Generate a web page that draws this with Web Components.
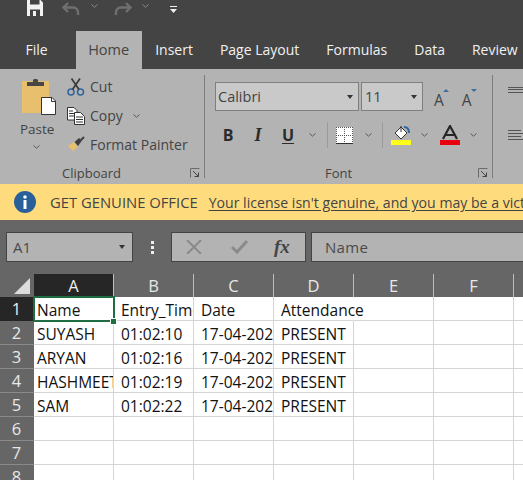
<!DOCTYPE html>
<html>
<head>
<meta charset="utf-8">
<style>
    html, body { margin: 0; padding: 0; background: #fff; }
    body {
        width: 523px;
        height: 480px;
        overflow: hidden;
        font-family: "Open Sans", "Liberation Sans", sans-serif;
        color: #444;
    }
</style>
</head>
<body>
<xl-titlebar></xl-titlebar>
<xl-tabs></xl-tabs>
<xl-ribbon></xl-ribbon>
<xl-banner></xl-banner>
<xl-formula-bar></xl-formula-bar>
<xl-sheet></xl-sheet>

<script>
const CHEVRON = (color = '#5a5a5a') => `<svg width="7" height="4" viewBox="0 0 7 4"><path d="M.5.5 3.5 3.2 6.5.5" fill="none" stroke="${color}" stroke-width="1"/></svg>`;

class XlTitlebar extends HTMLElement {
    constructor() {
        super();
        this.attachShadow({ mode: 'open' });
        this.shadowRoot.innerHTML = `
            <style>
                :host { display: flex; align-items: flex-start; height: 31px; background: #444; padding-left: 27px; box-sizing: border-box; }
                svg { display: block; flex: none; }
                .undo { margin: 2px 0 0 19px; }
                .chev1 { margin: 4px 0 0 11px; }
                .redo { margin: 2px 0 0 16px; }
                .chev2 { margin: 4px 0 0 10px; }
                .more { margin: 6px 0 0 21px; }
            </style>
            <svg width="16" height="16" viewBox="0 0 16 16"><path d="M0 0H13.5L16 2.5V16H0Z" fill="#f2f2f2"/><rect x="3" y="0" width="9.500" height="4.500" fill="#444"/><rect x="3" y="9.500" width="10" height="6.500" fill="#444"/><rect x="6" y="11" width="3" height="5" fill="#f2f2f2"/></svg>
            <svg class="undo" width="18" height="14" viewBox="0 0 18 14"><path d="M6 1 1.500 5.500 6 10M2 5.500H11C14.500 5.500 16.500 8 16 13" fill="none" stroke="#6f6f6f" stroke-width="2.400"/></svg>
            <span class="chev1">${CHEVRON('#8a8a8a')}</span>
            <svg class="redo" width="18" height="14" viewBox="0 0 18 14"><path d="M12 1 16.500 5.500 12 10M16 5.500H7C3.500 5.500 1.500 8 2 13" fill="none" stroke="#6f6f6f" stroke-width="2.400"/></svg>
            <span class="chev2">${CHEVRON('#8a8a8a')}</span>
            <svg class="more" width="7" height="8" viewBox="0 0 7 8"><rect x="0" y="0" width="7" height="1" fill="#eee"/><path d="M0 3H7L3.500 7Z" fill="#eee"/></svg>
        `;
    }
}

class XlTabs extends HTMLElement {
    constructor() {
        super();
        this.attachShadow({ mode: 'open' });
        const names = ['File', 'Home', 'Insert', 'Page Layout', 'Formulas', 'Data', 'Review'];
        this.shadowRoot.innerHTML = `
            <style>
                :host { display: flex; height: 38px; background: #444; padding-left: 12px; box-sizing: border-box; overflow: hidden; font-size: 14px; color: #f1f1f1; white-space: nowrap; }
                div { flex: none; padding: 0 13.5px; line-height: 38px; }
                div:first-of-type { padding-right: 28px; }
                .on { background: #b3b3b3; color: #444; padding: 0; width: 66px; text-align: center; font-size: 14.500px; box-sizing: border-box; }
            </style>
            ${names.map(n => `<div class="${n === 'Home' ? 'on' : ''}">${n}</div>`).join('')}
        `;
    }
}

class XlRibbon extends HTMLElement {
    constructor() {
        super();
        this.attachShadow({ mode: 'open' });
        const launcher = `<svg class="launch" width="10" height="10" viewBox="0 0 10 10"><path d="M.5 9.500V.5H9.500" fill="none" stroke="#6a6a6a"/><path d="M3 3 8.500 8.500M8.500 4.500V8.500H4.500" fill="none" stroke="#444"/></svg>`;
        this.shadowRoot.innerHTML = `
            <style>
                :host { display: flex; height: 115px; background: #b3b3b3; padding-top: 6px; box-sizing: border-box; overflow: hidden; font-size: 14px; color: #444; white-space: nowrap; }
                svg { display: block; flex: none; }
                .sep { flex: none; width: 1px; height: 103px; background: #7d7d7d; }
                .group { flex: none; display: grid; grid-template-rows: 90px 16px; box-sizing: border-box; }
                .label { display: flex; align-items: center; font-size: 13px; line-height: 16px; padding-right: 4px; }
                .launch { margin-left: auto; }

                .clipboard { width: 204px; }
                .clipboard .main { display: flex; }
                .clipboard .label { padding-left: 62px; }
                .paste { width: 67px; box-sizing: border-box; padding: 3px 0 0 21px; font-size: 13.500px; }
                .paste span { display: block; margin: 4px 0 0 -1px; line-height: 20px; }
                .paste i { display: block; margin: 6px 0 0 12px; }
                .actions { display: grid; grid-template-rows: repeat(3, 29px); margin-top: -3px; }
                .act { display: flex; align-items: center; }
                .act svg { width: 18px; margin-right: 5px; }
                .act i { margin-left: 10px; display: block; }
                .act i svg { width: 7px; margin: 0; }

                .font { width: 287px; padding-left: 10px; }
                .font .label { padding-left: 110px; }
                .row1 { display: flex; align-items: center; margin-top: 7px; height: 29px; }
                .combo { box-sizing: border-box; height: 29px; background: #c9c9c9; border: 1px solid #7f7f7f; display: flex; align-items: center; justify-content: space-between; padding: 0 5px 0 2px; font-size: 14.500px; }
                .combo.name { width: 144px; margin-right: 2px; }
                .combo.size { width: 62px; padding-left: 3px; }
                .tri { width: 0; height: 0; border: 3.500px solid transparent; border-top: 4px solid #333; border-bottom: 0; }
                .grow { position: relative; display: block; font-size: 15.500px; line-height: 20px; margin-top: 6px; }
                .grow svg { position: absolute; top: -1px; }
                .row2 { display: flex; align-items: center; margin: 11px 0 0 -2px; height: 26px; }
                .bt { width: 30px; text-align: center; font-size: 16px; font-weight: 700; color: #2b2b2b; flex: none; box-sizing: border-box; }
                .bt.i { font-family: "Liberation Serif", serif; font-style: italic; font-size: 18px; }
                .bt.u { text-decoration: underline; text-underline-offset: 2px; }
                .vsep { width: 1px; height: 26px; background: #9a9a9a; flex: none; }

                .align { padding: 12px 0 0 15px; display: grid; grid-template-rows: 43px 20px; }
            </style>
            <div class="group clipboard">
                <div class="main">
                    <div class="paste">
                        <svg width="35" height="37" viewBox="0 0 35 37"><rect x="1" y="3" width="27" height="32" fill="#e8c06d"/><path d="M6 8V4H12V2C12 .5 17 .5 17 2V4H23V8Z" fill="#474747"/><path d="M20.500 19.500H31L34.500 23V36.500H20.500Z" fill="#fff" stroke="#333"/><path d="M30.500 19.500V23.500H34.500" fill="none" stroke="#333"/></svg>
                        <span>Paste</span>
                        <i>${CHEVRON()}</i>
                    </div>
                    <div class="actions">
                        <div class="act"><svg height="18" viewBox="0 0 18 18"><circle cx="4" cy="14" r="3" fill="none" stroke="#2f659f" stroke-width="1.500"/><circle cx="13.500" cy="14" r="3" fill="none" stroke="#2f659f" stroke-width="1.500"/><path d="M5.500 11.500 13 .5M12 11.500 4.500 .5" stroke="#3a3a3a" stroke-width="1.700" fill="none"/></svg>Cut</div>
                        <div class="act"><svg height="18" viewBox="0 0 18 18"><path d="M.5.5H7L10 3.500V13H.5Z" fill="#fff" stroke="#333"/><path d="M2 4H6M2 6.500H8M2 9H8" stroke="#333"/><path d="M7.500 5.500H13.500L17.500 9.500V17.500H7.500Z" fill="#fff" stroke="#333"/><path d="M9 10H16M9 12.500H16M9 15H16" stroke="#333"/></svg>Copy<i>${CHEVRON()}</i></div>
                        <div class="act"><svg height="18" viewBox="0 0 18 18"><path d="M1 10 7 6 11 11 6 15 4 13Z" fill="#e8c06d"/><path d="M7.500 6 12 2 15 4.500 11 10Z" fill="#3f3f3f"/><path d="M14 4 17 1" stroke="#3f3f3f" stroke-width="2"/></svg>Format Painter</div>
                    </div>
                </div>
                <div class="label">Clipboard${launcher}</div>
            </div>
            <div class="sep"></div>
            <div class="group font">
                <div>
                    <div class="row1">
                        <div class="combo name">Calibri<span class="tri"></span></div>
                        <div class="combo size">11<span class="tri"></span></div>
                        <span class="grow" style="margin-left:11px">A<svg style="left:9px" width="6" height="3" viewBox="0 0 6 3"><path d="M3 0 6 3H0Z" fill="#3e6da3"/></svg></span>
                        <span class="grow" style="margin-left:18px">A<svg style="left:9px" width="6" height="3" viewBox="0 0 6 3"><path d="M0 0H6L3 3Z" fill="#3e6da3"/></svg></span>
                    </div>
                    <div class="row2">
                        <span class="bt">B</span><span class="bt i">I</span><span class="bt u">U</span>
                        <span style="margin:0 11px 0 6px">${CHEVRON()}</span>
                        <span class="vsep"></span>
                        <svg style="margin-left:8px" width="17" height="17" viewBox="0 0 17 17"><rect width="17" height="17" fill="#fff"/><path d="M8.500 0V17M0 8.500H17" stroke="#555" stroke-dasharray="1 1"/><path d="M.5 0V17M16.500 0V17M0 .5H17" stroke="#555" stroke-dasharray="1 1"/><path d="M0 16.500H17" stroke="#333"/></svg>
                        <span style="margin:0 10px 0 12px">${CHEVRON()}</span>
                        <span class="vsep"></span>
                        <svg style="margin-left:8px" width="21" height="20" viewBox="0 0 21 20"><path d="M4 8 10 2 16 8 10 14Z" fill="#fff" stroke="#333"/><path d="M10 1V7" stroke="#333"/><path d="M13 2C16 2 18 4 18 8" fill="none" stroke="#2f659f" stroke-width="2"/><rect x="0" y="15" width="20" height="5" fill="#ffff1a"/></svg>
                        <span style="margin:0 11px 0 9px">${CHEVRON()}</span>
                        <svg style="margin-left:1px" width="21" height="20" viewBox="0 0 21 20"><path d="M3 14 10 1 17 14M6 10H14" fill="none" stroke="#262626" stroke-width="2.200"/><rect x="0" y="15" width="20" height="5" fill="#e8000d"/></svg>
                        <span style="margin-left:9px">${CHEVRON()}</span>
                    </div>
                </div>
                <div class="label">Font${launcher}</div>
            </div>
            <div class="sep"></div>
            <div class="align">
                <svg width="15" height="6" viewBox="0 0 15 6"><path d="M0 .5H15M0 2.500H15M0 5.500H15" stroke="#555"/></svg>
                <svg width="15" height="11" viewBox="0 0 15 11"><path d="M0 .5H13M0 3.500H15M0 6.500H13M0 9.500H15" stroke="#555"/></svg>
            </div>
        `;
    }
}

class XlBanner extends HTMLElement {
    constructor() {
        super();
        this.attachShadow({ mode: 'open' });
        this.shadowRoot.innerHTML = `
            <style>
                :host { display: flex; align-items: center; height: 36px; background: #fedc7e; padding-left: 14px; box-sizing: border-box; overflow: hidden; white-space: nowrap; color: #444; font-size: 14.100px; }
                svg { flex: none; margin-right: 14px; }
                b { font-weight: 500; font-size: 14.800px; margin-right: 11px; }
                u { text-underline-offset: 2px; }
            </style>
            <svg width="22" height="22" viewBox="0 0 22 22"><circle cx="11" cy="11" r="11" fill="#2a6099"/><rect x="9.500" y="9" width="3" height="9" fill="#fff"/><circle cx="11" cy="6" r="1.800" fill="#fff"/></svg>
            <b>GET GENUINE OFFICE</b>
            <u>Your license isn't genuine, and you may be a victim of software counterfeiting.</u>
        `;
    }
}

class XlFormulaBar extends HTMLElement {
    constructor() {
        super();
        this.attachShadow({ mode: 'open' });
        this.shadowRoot.innerHTML = `
            <style>
                :host { display: flex; height: 54px; background: #666; padding: 12px 0 0 6px; box-sizing: border-box; overflow: hidden; font-size: 15px; color: #4a4a4a; }
                .box { box-sizing: border-box; height: 30px; background: #b3b3b3; border: 1px solid #444; display: flex; align-items: center; flex: none; }
                .namebox { width: 127px; justify-content: space-between; padding: 0 7px 0 6px; }
                .tri { width: 0; height: 0; border: 3.500px solid transparent; border-top: 4px solid #333; border-bottom: 0; }
                .dots { flex: none; width: 38px; display: grid; justify-content: center; align-content: center; gap: 2px; height: 30px; }
                .dots i { width: 3px; height: 3px; background: #eee; }
                .tools { width: 135px; margin-right: 5px; padding-left: 14px; }
                .tools svg { flex: none; }
                .fx { font-family: "Liberation Serif", serif; font-style: italic; font-weight: 700; font-size: 19px; color: #444; margin-left: 26px; }
                .input { flex: 1; margin-right: -3px; padding-left: 13px; letter-spacing: .3px; }
            </style>
            <div class="box namebox">A1<span class="tri"></span></div>
            <div class="dots"><i></i><i></i><i></i></div>
            <div class="box tools">
                <svg width="16" height="14" viewBox="0 0 16 14"><path d="M1 0 15 14M15 0 1 14" stroke="#8a8a8a" stroke-width="2"/></svg>
                <svg style="margin-left:29px" width="17" height="14" viewBox="0 0 17 14"><path d="M1 7 6 12 16 1" fill="none" stroke="#8a8a8a" stroke-width="3"/></svg>
                <span class="fx">fx</span>
            </div>
            <div class="box input">Name</div>
        `;
    }
}

class XlSheet extends HTMLElement {
    constructor() {
        super();
        this.attachShadow({ mode: 'open' });
        const rows = [
            ['Name', 'Entry_Time', 'Date', 'Attendance'],
            ['SUYASH', '01:02:10', '17-04-2021', 'PRESENT'],
            ['ARYAN', '01:02:16', '17-04-2021', 'PRESENT'],
            ['HASHMEET', '01:02:19', '17-04-2021', 'PRESENT'],
            ['SAM', '01:02:22', '17-04-2021', 'PRESENT']
        ];
        const cols = ['A', 'B', 'C', 'D', 'E', 'F', 'G'];
        let html = `<div class="corner"><svg width="17" height="18" viewBox="0 0 17 18"><path d="M16 1V17H0Z" fill="#dcdcdc"/></svg></div>`;
        cols.forEach(c => { html += `<div class="ch ${c === 'A' ? 'on' : ''}">${c === 'G' ? '' : c}</div>`; });
        for (let r = 0; r < 8; r++) {
            html += `<div class="rh ${r === 0 ? 'on' : ''}">${r + 1}</div>`;
            cols.forEach((c, i) => {
                const text = rows[r] ? rows[r][i] || '' : '';
                let cls = i === 0 ? 'cell first' : 'cell';
                // long text in D1 runs on over the empty E1
                if (r === 0 && i === 3) cls += ' spill';
                if (r === 0 && i === 0) cls += ' sel';
                html += `<div class="${cls}">${text ? `<span>${text}</span>` : ''}${r === 0 && i === 0 ? '<i class="box"></i><i class="handle"></i>' : ''}</div>`;
            });
        }
        this.shadowRoot.innerHTML = `
            <style>
                :host { display: grid; grid-template-columns: 34px repeat(7, 80px); grid-auto-rows: 24px; grid-template-rows: 23px; height: 206px; background: #666; overflow: hidden; font-size: 15.500px; }
                .corner { display: flex; align-items: center; justify-content: flex-end; padding-right: 3px; }
                .ch { background: #666; color: #e8e8e8; text-align: center; line-height: 23px; font-size: 16.500px; border-right: 1px solid #bdbdbd; box-sizing: border-box; }
                .ch.on { background: #262626; color: #eee; }
                .rh { background: #666; color: #e8e8e8; text-align: center; line-height: 23px; font-size: 16.500px; border-bottom: 1px solid #8a8a8a; box-sizing: border-box; padding-right: 1px; }
                .rh.on { background: #262626; color: #eee; border-bottom-color: #262626; }
                .cell { background: #fff; color: #111; box-sizing: border-box; border-right: 1px solid #d4d4d4; border-bottom: 1px solid #d4d4d4; padding-left: 7px; line-height: 26px; white-space: nowrap; overflow: hidden; position: relative; }
                .cell.first { padding-left: 3px; }
                .cell.spill { overflow: visible; border-right-color: #fff; z-index: 1; background: #fff; }
                .cell.sel { overflow: visible; z-index: 2; }
                .box { position: absolute; left: -1px; top: -1px; width: 82px; height: 26px; border: 2px solid #1f6e43; box-sizing: border-box; pointer-events: none; }
                .handle { position: absolute; right: -4px; bottom: -5px; width: 5px; height: 5px; background: #1f6e43; border: 1px solid #fff; }
            </style>
            ${html}
        `;
    }
}

customElements.define('xl-titlebar', XlTitlebar);
customElements.define('xl-tabs', XlTabs);
customElements.define('xl-ribbon', XlRibbon);
customElements.define('xl-banner', XlBanner);
customElements.define('xl-formula-bar', XlFormulaBar);
customElements.define('xl-sheet', XlSheet);
</script>
</body>
</html>
